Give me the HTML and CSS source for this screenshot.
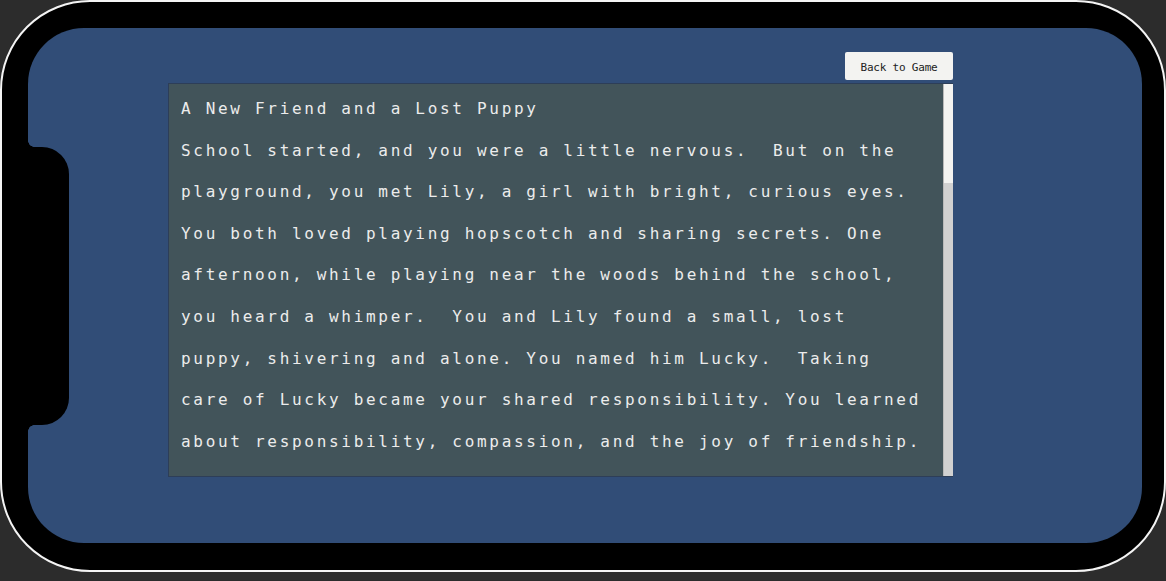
FILE: index.html
```html
<!DOCTYPE html>
<html lang="en">
<head>
<meta charset="utf-8">
<title>Story</title>
<link rel="stylesheet" href="styles.css">
</head>
<body>
<div class="phone">
  <div class="screen">
    <div class="notch"></div>
    <div class="reader">
      <button class="back-btn" type="button">Back to Game</button>
      <div class="story">
        <div class="story-body">
          <h1 class="story-title">A New Friend and a Lost Puppy</h1>
          <p class="story-text">School started, and you were a little nervous.  But on the
playground, you met Lily, a girl with bright, curious eyes.
You both loved playing hopscotch and sharing secrets. One
afternoon, while playing near the woods behind the school,
you heard a whimper.  You and Lily found a small, lost
puppy, shivering and alone. You named him Lucky.  Taking
care of Lucky became your shared responsibility. You learned
about responsibility, compassion, and the joy of friendship.
Together, you put up posters all around the neighborhood.</p>
        </div>
        <div class="scrollbar"><div class="scrollbar-thumb"></div></div>
      </div>
    </div>
  </div>
</div>
</body>
</html>
```

FILE: styles.css
```css
html, body {
  margin: 0;
  padding: 0;
}

body {
  width: 1166px;
  height: 581px;
  background: #2c2c2c;
  overflow: hidden;
}

.phone {
  box-sizing: border-box;
  width: 1166px;
  height: 572px;
  border: 2px solid #f4f4f4;
  border-radius: 90px;
  background: #000;
  padding: 26px 22px 27px 26px;
}

.screen {
  position: relative;
  box-sizing: border-box;
  width: 1114px;
  height: 515px;
  border-radius: 56px;
  background: #314d77;
  display: flex;
  align-items: flex-start;
  padding: 24px 0 0 140px;
}

.notch {
  position: absolute;
  left: 0;
  top: 119px;
  width: 41px;
  height: 278px;
  background: #000;
  border-radius: 0 27px 27px 0;
}

.notch::before,
.notch::after {
  content: "";
  position: absolute;
  left: 0;
  width: 6px;
  height: 6px;
}

.notch::before {
  top: -6px;
  background: radial-gradient(circle at 100% 0, transparent 5.5px, #000 6px);
}

.notch::after {
  top: 100%;
  background: radial-gradient(circle at 100% 100%, transparent 5.5px, #000 6px);
}

.reader {
  width: 785px;
  display: flex;
  flex-direction: column;
  align-items: flex-end;
  gap: 3px;
}

.back-btn {
  width: 108px;
  height: 28px;
  border: 0;
  border-radius: 2px;
  background: #f3f3f1;
  color: #222;
  font-family: "DejaVu Sans Mono", monospace;
  font-size: 11px;
  letter-spacing: -0.2px;
  padding: 2px 0 0 0;
  cursor: pointer;
}

.story {
  box-sizing: border-box;
  width: 785px;
  height: 394px;
  background: #42545a;
  border: 1px solid #2d3e58;
  border-right: 0;
  display: flex;
}

.story-body {
  flex: 1;
  min-width: 0;
  overflow: hidden;
  padding: 4px 0 0 12px;
  color: #ececec;
  font-family: "DejaVu Sans Mono", monospace;
  font-size: 16px;
  line-height: 41.6px;
  letter-spacing: 2.7px;
}

.scrollbar {
  width: 9px;
  flex: none;
  background: #d1d1d1;
  border-left: 1px solid #b9b9b9;
}

.scrollbar-thumb {
  height: 99px;
  background: #f3f3f1;
}

.story-title {
  margin: 0;
  font-size: 16px;
  font-weight: normal;
}

.story-text {
  margin: 0;
  white-space: pre;
}
```
